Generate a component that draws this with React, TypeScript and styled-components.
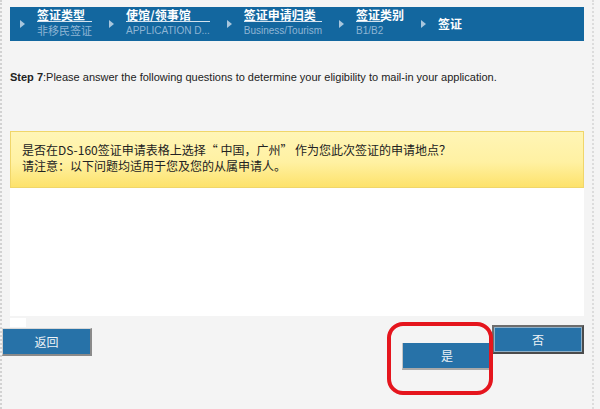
import styled, { createGlobalStyle } from 'styled-components';

const GlobalStyle = createGlobalStyle`
  body {
    margin: 0;
    background: #f4f4f4;
    font-family: 'Liberation Sans', 'Noto Sans CJK SC', sans-serif;
  }
`;

const Frame = styled.div`
  box-sizing: border-box;
  width: 594px;
  height: 409px;
  border-left: 2px dotted #d2d2d2;
  border-right: 2px dotted #dcdcdc;
  display: flex;
  flex-direction: column;
  overflow: hidden;
`;

const Content = styled.div`
  padding: 7px 8px 0 8px;
`;

const Crumbs = styled.nav`
  height: 34px;
  background: #13679f;
  display: flex;
  align-items: center;
  gap: 17px;
  padding-left: 10px;
`;

const Crumb = styled.div`
  display: flex;
  align-items: center;
  gap: 12px;
`;

const Arrow = styled.span`
  width: 0;
  height: 0;
  border-left: 5px solid #a8c6dd;
  border-top: 4px solid transparent;
  border-bottom: 4px solid transparent;
`;

const Labels = styled.div`
  display: flex;
  flex-direction: column;
  align-items: flex-start;
`;

const Title = styled.span`
  color: #fff;
  font-family: 'Noto Sans CJK SC', sans-serif;
  font-weight: 700;
  font-size: 12px;
  line-height: 12px;
`;

const Sub = styled.span<{ $cjk?: boolean }>`
  display: inline-block;
  border-top: 1px solid #d5e3ee;
  color: #8fb5d4;
  font-family: ${(p) =>
    p.$cjk ? "'Noto Sans CJK SC', sans-serif" : "'Liberation Sans', sans-serif"};
  font-size: ${(p) => (p.$cjk ? '11px' : '10px')};
  line-height: 17px;
`;

const StepText = styled.p`
  margin: 29px 0 0;
  font-size: 11px;
  line-height: 14px;
  color: #222;
  b {
    font-weight: 700;
  }
`;

const Notice = styled.div`
  margin-top: 47px;
  box-sizing: border-box;
  height: 57px;
  padding: 10px 12px 0 11px;
  border: 1px solid #f0d66a;
  background: linear-gradient(#fff5b6 0%, #fff1a2 55%, #fde26b 100%);
  font-family: 'Noto Sans CJK SC', sans-serif;
  font-size: 12px;
  line-height: 16px;
  color: #222;
`;

const Panel = styled.div`
  position: relative;
  height: 128px;
  background: #fff;
  &::after {
    content: '';
    position: absolute;
    left: 0;
    bottom: -11px;
    width: 16px;
    height: 9px;
    background: #fff;
  }
`;

const ButtonRow = styled.div`
  display: flex;
  align-items: flex-start;
  padding-right: 8px;
`;

const Button = styled.button`
  box-sizing: border-box;
  background: #2772a8;
  color: #eef3f7;
  font-family: 'Noto Sans CJK SC', sans-serif;
  font-size: 12px;
  padding: 0;
  cursor: pointer;
`;

const BackButton = styled(Button)`
  margin-top: 12px;
  width: 90px;
  height: 28px;
  border: none;
  border-top: 1px solid #d8d8d8;
  border-left: 1px solid #cfcfcf;
  border-right: 2px solid #8a8a8a;
  border-bottom: 2px solid #8a8a8a;
`;

const YesWrap = styled.div`
  position: relative;
  margin-top: 27px;
  margin-left: auto;
  margin-right: 1px;
  &::after {
    content: '';
    position: absolute;
    inset: -21px -2px -25px -15px;
    border: 4px solid #e5151d;
    border-radius: 16px;
    pointer-events: none;
  }
`;

const YesButton = styled(Button)`
  display: block;
  width: 89px;
  height: 27px;
  border: none;
  border-left: 1px solid #c4c4c4;
  border-bottom: 2px solid #a9a9a9;
`;

const NoButton = styled(Button)`
  margin-top: 9px;
  width: 92px;
  height: 29px;
  border: 2px solid #4b4b4b;
  border-top-color: #6d6d6d;
  border-left-color: #6d6d6d;
  box-shadow: inset 0 0 0 1px #8fb0c8;
`;

const steps = [
  { title: '签证类型', sub: '非移民签证', cjk: true },
  { title: '使馆/领事馆', sub: 'APPLICATION D...' },
  { title: '签证申请归类', sub: 'Business/Tourism' },
  { title: '签证类别', sub: 'B1/B2' },
  { title: '签证' },
];

export default function App() {
  return (
    <>
      <GlobalStyle />
      <Frame>
        <Content>
          <Crumbs>
            {steps.map((s) => (
              <Crumb key={s.title}>
                <Arrow />
                <Labels>
                  <Title>{s.title}</Title>
                  {s.sub && <Sub $cjk={s.cjk}>{s.sub}</Sub>}
                </Labels>
              </Crumb>
            ))}
          </Crumbs>
          <StepText>
            <b>Step 7</b>:Please answer the following questions to determine your
            eligibility to mail-in your application.
          </StepText>
          <Notice>
            是否在DS-160签证申请表格上选择“ 中国，广州” 作为您此次签证的申请地点？
            <br />
            请注意：以下问题均适用于您及您的从属申请人。
          </Notice>
          <Panel />
        </Content>
        <ButtonRow>
          <BackButton>返回</BackButton>
          <YesWrap>
            <YesButton>是</YesButton>
          </YesWrap>
          <NoButton>否</NoButton>
        </ButtonRow>
      </Frame>
    </>
  );
}
